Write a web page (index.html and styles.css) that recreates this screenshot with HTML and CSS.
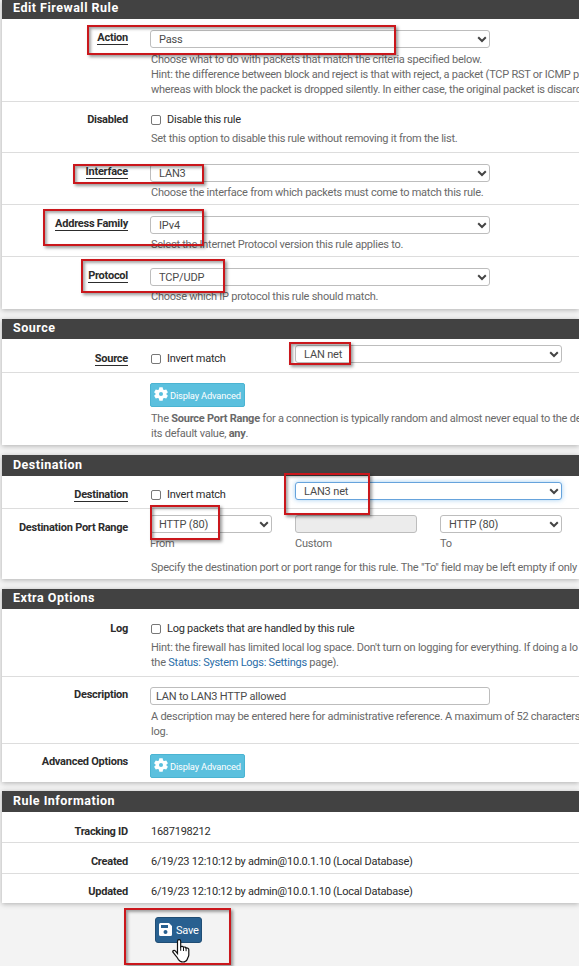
FILE: index.html
```html
<!DOCTYPE html>
<html lang="en">
<head>
<meta charset="utf-8">
<title>Edit Firewall Rule</title>
<link rel="stylesheet" href="styles.css">
</head>
<body>
<svg width="0" height="0" class="defs">
  <symbol id="chev" viewBox="0 0 10 7"><path d="M1.200 1.300 5 5l3.800-3.700" fill="none" stroke="#444" stroke-width="2"/></symbol>
  <symbol id="gear" viewBox="0 0 24 24"><path fill="#fff" fill-rule="evenodd" d="M9.200.5h5.600l.8 3.600 1.900 1.100 3.500-1.100 2.800 4.900-2.700 2.500v1l2.700 2.500-2.800 4.900-3.500-1.100-1.900 1.100-.8 3.600H9.200l-.8-3.600-1.900-1.100L3 19.900.2 15l2.700-2.500v-1L.2 9 3 4.100l3.500 1.100 1.900-1.100zM12 8.500a3.500 3.500 0 1 0 0 7 3.500 3.500 0 0 0 0-7z"/></symbol>
</svg>
<main class="page">
  <section class="panel p-edit">
    <h2>Edit Firewall Rule</h2>
    <div class="row r-action">
      <div class="label"><u>Action</u></div>
      <div class="field">
        <div class="select w-wide">Pass<svg><use href="#chev"/></svg></div>
        <p class="help">Choose what to do with packets that match the criteria specified below.<br>Hint: the difference between block and reject is that with reject, a packet (TCP RST or ICMP p<br>whereas with block the packet is dropped silently. In either case, the original packet is discard</p>
      </div>
    </div>
    <div class="row r-disabled">
      <div class="label">Disabled</div>
      <div class="field">
        <div class="check"><i></i>Disable this rule</div>
        <p class="help">Set this option to disable this rule without removing it from the list.</p>
      </div>
    </div>
    <div class="row r-select">
      <div class="label"><u>Interface</u></div>
      <div class="field">
        <div class="select w-wide">LAN3<svg><use href="#chev"/></svg></div>
        <p class="help">Choose the interface from which packets must come to match this rule.</p>
      </div>
    </div>
    <div class="row r-select">
      <div class="label"><u>Address Family</u></div>
      <div class="field">
        <div class="select w-wide">IPv4<svg><use href="#chev"/></svg></div>
        <p class="help">Select the Internet Protocol version this rule applies to.</p>
      </div>
    </div>
    <div class="row r-select">
      <div class="label"><u>Protocol</u></div>
      <div class="field">
        <div class="select w-wide">TCP/UDP<svg><use href="#chev"/></svg></div>
        <p class="help">Choose which IP protocol this rule should match.</p>
      </div>
    </div>
  </section>

  <section class="panel p-source">
    <h2>Source</h2>
    <div class="row r-match r-src">
      <div class="label"><u>Source</u></div>
      <div class="field inline">
        <div class="check"><i></i>Invert match</div>
        <div class="select w-net">LAN net<svg><use href="#chev"/></svg></div>
      </div>
    </div>
    <div class="row r-srcadv">
      <div class="label"></div>
      <div class="field">
        <div class="btn-info"><svg><use href="#gear"/></svg>Display Advanced</div>
        <p class="help">The <b>Source Port Range</b> for a connection is typically random and almost never equal to the de<br>its default value, <b>any</b>.</p>
      </div>
    </div>
  </section>

  <section class="panel p-dest">
    <h2>Destination</h2>
    <div class="row r-match r-dst">
      <div class="label"><u>Destination</u></div>
      <div class="field inline">
        <div class="check"><i></i>Invert match</div>
        <div class="select w-net focus">LAN3 net<svg><use href="#chev"/></svg></div>
      </div>
    </div>
    <div class="row r-port">
      <div class="label">Destination Port Range</div>
      <div class="field">
        <div class="ports">
          <div><div class="select">HTTP (80)<svg><use href="#chev"/></svg></div><span>From</span></div>
          <div><div class="select disabled"></div><span>Custom</span></div>
          <div><div class="select">HTTP (80)<svg><use href="#chev"/></svg></div><span>To</span></div>
        </div>
        <p class="help">Specify the destination port or port range for this rule. The "To" field may be left empty if only</p>
      </div>
    </div>
  </section>

  <section class="panel p-extra">
    <h2>Extra Options</h2>
    <div class="row r-log">
      <div class="label">Log</div>
      <div class="field">
        <div class="check"><i></i>Log packets that are handled by this rule</div>
        <p class="help">Hint: the firewall has limited local log space. Don't turn on logging for everything. If doing a lo<br>the <a>Status: System Logs: Settings</a> page).</p>
      </div>
    </div>
    <div class="row r-desc">
      <div class="label">Description</div>
      <div class="field">
        <div class="select text w-wide">LAN to LAN3 HTTP allowed</div>
        <p class="help">A description may be entered here for administrative reference. A maximum of 52 characters<br>log.</p>
      </div>
    </div>
    <div class="row r-adv">
      <div class="label">Advanced Options</div>
      <div class="field">
        <div class="btn-info"><svg><use href="#gear"/></svg>Display Advanced</div>
      </div>
    </div>
  </section>

  <section class="panel p-info">
    <h2>Rule Information</h2>
    <div class="row r-info"><div class="label">Tracking ID</div><div class="field">1687198212</div></div>
    <div class="row r-info"><div class="label">Created</div><div class="field">6/19/23 12:10:12 by admin@10.0.1.10 (Local Database)</div></div>
    <div class="row r-info"><div class="label">Updated</div><div class="field">6/19/23 12:10:12 by admin@10.0.1.10 (Local Database)</div></div>
  </section>

  <div class="btn-save">
    <svg viewBox="0 0 13 13"><path fill="#fff" fill-rule="evenodd" d="M1.500 0H10l3 3v8.500a1.500 1.500 0 0 1-1.500 1.500h-10A1.500 1.500 0 0 1 0 11.500v-10A1.500 1.500 0 0 1 1.500 0zM2 2v3h7V2zm4.500 5a2 2 0 1 0 0 4 2 2 0 0 0 0-4z"/></svg>Save
  </div>

  <div class="mark m-action"></div>
  <div class="mark m-interface"></div>
  <div class="mark m-family"></div>
  <div class="mark m-protocol"></div>
  <div class="mark m-src"></div>
  <div class="mark m-dst"></div>
  <div class="mark m-port"></div>
  <div class="mark m-save"></div>
  <svg class="cursor" viewBox="0 0 18 24"><path d="M5.500 14.500V2.300a1.600 1.600 0 0 1 3.200 0v5.500c.9-.8 2.500-.4 2.800.5.900-.6 2.300-.2 2.500.8 1.300-.5 2.800.2 2.800 1.700v5.200c0 1.500-1.300 3-1.500 4.200-.8 1.800-2 2.800-4.300 2.800-2.500 0-3.800-1-4.800-2.800C5.300 17.800 2.500 15.500.9 13.200c-.6-1.500 1.200-2.300 2.400-1.300z" fill="#fff" stroke="#111" stroke-width="1.200"/><path d="M8.700 7.800v4M11.500 8.500v3.500M14.100 9.200v3" stroke="#111" fill="none"/></svg>
</main>
</body>
</html>
```
FILE: styles.css
```css
* { box-sizing: border-box; }
body {
  margin: 0;
  background: #f3f3f3;
  font: 11px/15px Roboto, "Liberation Sans", sans-serif;
  letter-spacing: -.245px;
  color: #2c2c2c;
  overflow: hidden;
}
.defs { position: absolute; }
.page {
  position: relative;
  width: 579px;
  height: 966px;
  overflow: hidden;
}
.panel {
  margin: 0 0 10px 2px;
  background: #fff;
  box-shadow: 0 1px 5px rgba(0, 0, 0, .28);
}
.p-edit { height: 309px; }
.p-source { height: 126px; }
.p-dest { height: 124px; }
.p-extra { height: 193px; margin-bottom: 9px; }
.p-info { height: 112px; }
h2 {
  margin: 0;
  height: 20px;
  padding-left: 11px;
  background: #424242;
  color: #fff;
  font-size: 12.500px;
  font-weight: 700;
  line-height: 18px;
  letter-spacing: .5px;
}
.p-edit h2 { height: 19px; line-height: 16px; }
.p-dest h2, .p-info h2 { height: 21px; line-height: 20px; }

.row {
  display: grid;
  grid-template-columns: 126px 560px;
  column-gap: 22px;
  border-bottom: 1px solid #ddd;
  white-space: nowrap;
}
.row:last-child { border-bottom: 0; }
.label { text-align: right; font-weight: 700; }
.label u {
  display: inline-block;
  text-decoration: none;
  line-height: 12px;
  border-bottom: 1px solid #2c2c2c;
}
.help { margin: 3px 0 0; padding-left: 1px; color: #696969; }
a { color: #2a6da8; }

.select {
  display: flex;
  align-items: center;
  justify-content: space-between;
  height: 18px;
  padding: 0 2px 0 8px;
  border: 1px solid #bdbdbd;
  border-radius: 3px;
  background: #fff;
  color: #4a4a4a;
  letter-spacing: -.15px;
}
.select svg { width: 10px; height: 7px; }
.w-wide { width: 340px; }
.w-net { width: 267px; }
.text { padding-left: 5px; letter-spacing: -.2px; }
.disabled { background: #ececec; }
.focus { border-color: #66a3dc; box-shadow: 0 0 5px rgba(102, 175, 233, .6); }
.check { display: flex; align-items: center; height: 15px; }
.check i {
  width: 10px;
  height: 10px;
  margin: 1px 6px 0 1px;
  border: 1px solid #777;
  border-radius: 2px;
  background: #fff;
}

.r-action { height: 83px; padding-top: 11px; }
.r-action .help { margin-top: 4px; }
.r-disabled { height: 51px; padding-top: 10px; }
.r-disabled .help { margin-top: 4px; }
.r-select { height: 52px; padding-top: 11px; }
.inline { display: flex; }
.inline .check { width: 145px; }
.r-match .label { padding-top: 6px; }
.r-match .check { margin-top: 6px; }
.r-src { height: 34px; padding-top: 6px; }
.r-dst { height: 33px; padding-top: 6px; }
.r-dst .label { padding-top: 5px; }
.r-dst .check { margin-top: 5px; }
.r-srcadv { padding-top: 10px; }
.r-srcadv .help { margin-top: 4px; }
.r-port { padding-top: 6px; }
.r-port .label { padding-top: 5px; }
.ports { display: grid; grid-template-columns: repeat(3, 122px); column-gap: 23px; }
.ports span { display: block; margin-top: 3px; color: #696969; }
.r-port .help { margin-top: 9px; }
.r-log { height: 68px; padding-top: 12px; }
.r-log .help { margin-top: 4px; }
.r-desc { height: 67px; padding-top: 10px; }
.r-desc .help { margin-top: 4px; }
.r-adv { padding-top: 10px; }
.r-info { height: 31px; padding-top: 12px; }
.r-info:last-child { padding-top: 10px; }
.r-info:nth-child(3) { padding-top: 11px; }
.r-info .field { padding-left: 1px; }

.btn-info {
  display: flex;
  align-items: center;
  width: 95px;
  height: 24px;
  padding: 1px 0 0 4px;
  border: 1px solid #4bb4d2;
  border-radius: 2px;
  background: #5bc0de;
  color: #fff;
  font-size: 9.300px;
  letter-spacing: -.16px;
}
.btn-info svg { width: 14px; height: 14px; margin: -4px 2px 0 -1px; overflow: visible; }
.btn-save {
  display: flex;
  align-items: center;
  width: 47px;
  height: 26px;
  margin: 14px 0 0 155px;
  padding-left: 3px;
  border: 1px solid #204d74;
  border-radius: 3px;
  background: #286090;
  color: #fff;
}
.btn-save svg { width: 13px; height: 13px; margin: -1px 4px 0 0; }

.mark {
  position: absolute;
  border: 2px solid #ca171c;
  box-shadow: 2px 2px 3px rgba(0, 0, 0, .4), inset 2px 2px 3px rgba(0, 0, 0, .35);
}
.m-action { left: 87px; top: 25px; width: 309px; height: 30px; }
.m-interface { left: 73px; top: 164px; width: 131px; height: 20px; }
.m-family { left: 43px; top: 209px; width: 161px; height: 37px; }
.m-protocol { left: 81px; top: 259px; width: 144px; height: 34px; }
.m-src { left: 289px; top: 342px; width: 62px; height: 23px; }
.m-dst { left: 284px; top: 473px; width: 86px; height: 42px; }
.m-port { left: 150px; top: 505px; width: 70px; height: 35px; }
.m-save { left: 124px; top: 908px; width: 107px; height: 57px; }
.cursor { position: absolute; left: 172px; top: 939px; width: 18px; height: 24px; }
```
